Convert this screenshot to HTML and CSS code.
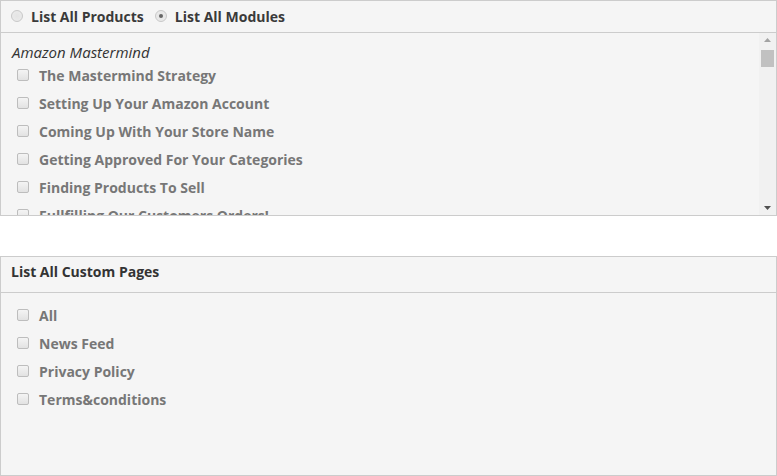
FILE: index.html
```html
<!DOCTYPE html>
<html>
<head>
<meta charset="utf-8">
<link rel="stylesheet" href="styles.css">
</head>
<body>
<div class="panel panel-modules">
  <div class="panel-head">
    <label class="radio"><input type="radio" name="mode"> List All Products</label>
    <label class="radio"><input type="radio" name="mode" checked> List All Modules</label>
  </div>
  <div class="panel-body scroll-wrap">
    <div class="scroll">
      <div class="group-title">Amazon Mastermind</div>
      <label class="item"><input type="checkbox"> The Mastermind Strategy</label>
      <label class="item"><input type="checkbox"> Setting Up Your Amazon Account</label>
      <label class="item"><input type="checkbox"> Coming Up With Your Store Name</label>
      <label class="item"><input type="checkbox"> Getting Approved For Your Categories</label>
      <label class="item"><input type="checkbox"> Finding Products To Sell</label>
      <label class="item"><input type="checkbox"> Fullfilling Our Customers Orders!</label>
      <label class="item"><input type="checkbox"> Handling Returns</label>
      <label class="item"><input type="checkbox"> Growing Your Store</label>
    </div>
    <div class="scrollbar">
      <div class="sb-btn">
        <svg width="17" height="14" viewBox="0 0 17 14"><path d="M5 9h7L8.5 5z" fill="#a3a3a3"/></svg>
      </div>
      <div class="sb-track">
        <div class="sb-thumb"></div>
      </div>
      <div class="sb-btn">
        <svg width="17" height="14" viewBox="0 0 17 14"><path d="M5 5h7L8.5 9z" fill="#505050"/></svg>
      </div>
    </div>
  </div>
</div>
<div class="panel panel-pages">
  <div class="panel-head title">List All Custom Pages</div>
  <div class="panel-body pages">
    <label class="item"><input type="checkbox"> All</label>
    <label class="item"><input type="checkbox"> News Feed</label>
    <label class="item"><input type="checkbox"> Privacy Policy</label>
    <label class="item"><input type="checkbox"> Terms&amp;conditions</label>
  </div>
</div>
</body>
</html>
```
FILE: styles.css
```css
html, body {
  margin: 0;
  padding: 0;
  background: #fff;
  font-family: "Open Sans", "Liberation Sans", sans-serif;
}
.panel {
  border: 1px solid #cccccc;
  background: #f5f5f5;
  width: 775px;
}
.panel-modules {
  height: 214px;
  display: flex;
  flex-direction: column;
}
.panel-pages {
  margin-top: 40px;
  height: 218px;
  display: flex;
  flex-direction: column;
}
.panel-head {
  border-bottom: 1px solid #cccccc;
  display: flex;
  align-items: center;
  padding-left: 9px;
  gap: 10px;
  flex: none;
  box-sizing: border-box;
  height: 32px;
  padding-bottom: 1px;
}
.panel-head.title {
  height: 36px;
  padding-left: 10px;
  align-items: flex-start;
  padding-top: 5px;
  font-size: 14px;
  line-height: 19px;
  font-weight: 700;
  color: #333;
}
.radio {
  display: flex;
  align-items: center;
  font-size: 14px;
  font-weight: 700;
  color: #3a3a3a;
}
.radio input {
  appearance: none;
  -webkit-appearance: none;
  margin: 0 8px 0 1px;
  width: 12px;
  height: 12px;
  border-radius: 50%;
  border: 1px solid #c8c8c8;
  background: radial-gradient(circle, #e4e4e4 0%, #ececec 100%);
  box-sizing: border-box;
  position: relative;
}
.radio input:checked::after {
  content: "";
  position: absolute;
  left: 3px;
  top: 3px;
  width: 4px;
  height: 4px;
  border-radius: 50%;
  background: #666;
}
.panel-body {
  flex: 1;
  min-height: 0;
}
.scroll-wrap {
  display: flex;
}
.scroll {
  flex: 1;
  overflow: hidden;
  padding: 10px 0 0 11px;
}
.scrollbar {
  width: 17px;
  flex: none;
  background: #f1f1f1;
  display: flex;
  flex-direction: column;
}
.sb-btn {
  height: 14px;
  flex: none;
}
.sb-btn svg {
  display: block;
}
.sb-track {
  flex: 1;
  padding: 3px 2px 0 2px;
}
.sb-thumb {
  height: 17px;
  background: #c1c1c1;
}
.group-title {
  font-style: italic;
  font-size: 15px;
  color: #333;
  height: 18px;
  line-height: 18px;
}
.item {
  display: flex;
  align-items: center;
  height: 28px;
  font-size: 14px;
  font-weight: 700;
  color: #777;
  white-space: nowrap;
}
.item input {
  appearance: none;
  -webkit-appearance: none;
  margin: 0 10px 0 5px;
  width: 12px;
  height: 12px;
  flex: none;
  box-sizing: border-box;
  border: 1px solid #bdbdbd;
  border-radius: 2px;
  background: linear-gradient(#f4f4f4, #e2e2e2);
}
.pages {
  padding: 8px 0 0 11px;
}
```
